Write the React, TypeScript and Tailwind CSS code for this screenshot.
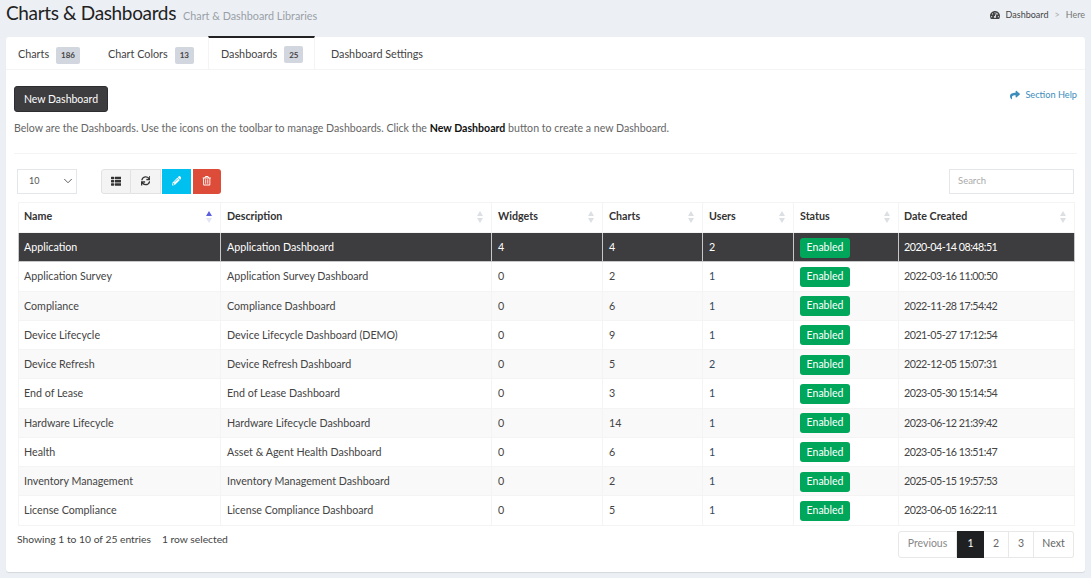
import { FaTachometerAlt, FaThList, FaSync, FaPencilAlt, FaRegTrashAlt, FaShare } from "react-icons/fa";
import { ChevronDown } from "lucide-react";

const rows = [
  ["Application", "Application Dashboard", "4", "4", "2", "2020-04-14 08:48:51"],
  ["Application Survey", "Application Survey Dashboard", "0", "2", "1", "2022-03-16 11:00:50"],
  ["Compliance", "Compliance Dashboard", "0", "6", "1", "2022-11-28 17:54:42"],
  ["Device Lifecycle", "Device Lifecycle Dashboard (DEMO)", "0", "9", "1", "2021-05-27 17:12:54"],
  ["Device Refresh", "Device Refresh Dashboard", "0", "5", "2", "2022-12-05 15:07:31"],
  ["End of Lease", "End of Lease Dashboard", "0", "3", "1", "2023-05-30 15:14:54"],
  ["Hardware Lifecycle", "Hardware Lifecycle Dashboard", "0", "14", "1", "2023-06-12 21:39:42"],
  ["Health", "Asset & Agent Health Dashboard", "0", "6", "1", "2023-05-16 13:51:47"],
  ["Inventory Management", "Inventory Management Dashboard", "0", "2", "1", "2025-05-15 19:57:53"],
  ["License Compliance", "License Compliance Dashboard", "0", "5", "1", "2023-06-05 16:22:11"],
];

const cols = [
  ["Name", "w-[202px] pl-[5px]"],
  ["Description", "w-[271px] pl-[6px]"],
  ["Widgets", "w-[111px] pl-[6px]"],
  ["Charts", "w-[100px] pl-[6px]"],
  ["Users", "w-[91px] pl-[6px]"],
  ["Status", "w-[105px] pl-[6px]"],
  ["Date Created", "w-[176px] pl-[5px]"],
];

function Sort({ active }: { active?: boolean }) {
  return (
    <span className="absolute right-[8px] top-[8px] flex flex-col gap-[2px]">
      <svg width="6" height="5" viewBox="0 0 6 5"><path d="M3 0L6 5H0z" fill={active ? "#5b5fe0" : "#dcdfe3"} /></svg>
      <svg width="6" height="5" viewBox="0 0 6 5"><path d="M0 0H6L3 5z" fill={active ? "#e3e4f6" : "#dcdfe3"} /></svg>
    </span>
  );
}

function Tab({ label, badge, active, w }: { label: string; badge?: string; active?: boolean; w: string }) {
  return (
    <div
      className={`flex items-center gap-[7px] pl-[12px] text-[10.8px] text-[#444] ${w} ${
        active ? "-mt-px h-[34px] border-x border-t-2 border-x-[#f4f4f4] border-t-[#222]" : "h-[33px] pt-[2px]"
      }`}
    >
      <span>{label}</span>
      {badge && (
        <span className="mt-[1px] flex h-[17px] items-center rounded-[2px] bg-[#d2d6de] px-[5px] text-[8px] font-bold text-[#444]">
          {badge}
        </span>
      )}
    </div>
  );
}

export default function App() {
  return (
    <div
      className="flex h-[578px] w-[1091px] flex-col overflow-hidden bg-[#ecf0f5] text-[10.7px] text-[#333]"
      style={{ fontFamily: "Lato, sans-serif" }}
    >
      <header className="flex h-[37px] shrink-0 items-start justify-between px-[6px]">
        <div className="flex items-baseline gap-[7px]">
          <h1 className="text-[19px] leading-[26px] tracking-[-0.35px] text-[#222]">Charts &amp; Dashboards</h1>
          <span className="text-[10.8px] text-[#9a9fa6]">Chart &amp; Dashboard Libraries</span>
        </div>
        <div className="mt-[8px] flex items-center text-[9px] text-[#444]">
          <FaTachometerAlt className="mr-[6px] text-[10px]" />
          <span>Dashboard</span>
          <span className="mx-[6px] text-[#aaa]">&gt;</span>
          <span className="text-[#777]">Here</span>
        </div>
      </header>

      <main className="mx-[6px] flex h-[535px] w-[1079px] flex-col rounded-[3px] bg-white shadow-[0_1px_1px_rgba(0,0,0,0.1)]">
        <nav className="flex h-[33px] shrink-0 border-b border-[#f4f4f4]">
          <Tab w="w-[90px]" label="Charts" badge="186" />
          <Tab w="w-[112px]" label="Chart Colors" badge="13" />
          <Tab w="w-[107px]" label="Dashboards" badge="25" active />
          <Tab w="w-[130px] ml-[4px]" label="Dashboard Settings" />
        </nav>

        <div className="flex flex-1 flex-col px-[11px]">
          <div className="flex items-start justify-between pt-[16px]">
            <button className="ml-[-3px] h-[26px] w-[94px] rounded-[3px] border border-[#2e2d2f] bg-[#3d3c3e] pt-[1px] text-[10.5px] text-white">
              New Dashboard
            </button>
            <div className="mr-[-3px] mt-[2px] flex items-center gap-[5px] text-[9.2px] text-[#3c8dbc]">
              <FaShare className="text-[10px]" />
              <span>Section Help</span>
            </div>
          </div>
          <p className="ml-[-3px] mt-[8px] text-[10.6px] leading-[16px] text-[#666]">
            Below are the Dashboards. Use the icons on the toolbar to manage Dashboards. Click the{" "}
            <b className="text-[#111]">New Dashboard</b> button to create a new Dashboard.
          </p>
          <div className="ml-[-3px] mr-[-3px] mt-[17px] border-t border-[#f4f4f4]" />

          <div className="mt-[14px] flex h-[26px] items-center">
            <div className="flex h-[25px] w-[60px] items-center justify-between border border-[#e4e6e9] pl-[11px] pr-[1px] text-[9px] text-[#555]">
              10
              <ChevronDown size={14} strokeWidth={1.6} />
            </div>
            <div className="ml-[24px] flex h-[25px]">
              <div className="flex w-[30px] items-center justify-center rounded-l-[3px] border border-[#e2e2e2] bg-[#f4f4f4] text-[#333]">
                <FaThList className="text-[10.5px]" />
              </div>
              <div className="flex w-[30px] items-center justify-center border border-l-0 border-[#e2e2e2] bg-[#f4f4f4] text-[#333]">
                <FaSync className="text-[9.5px]" />
              </div>
              <div className="ml-px flex w-[29px] items-center justify-center bg-[#00c0ef] text-white">
                <FaPencilAlt className="text-[9.5px]" />
              </div>
              <div className="ml-[2px] flex w-[28px] items-center justify-center rounded-r-[3px] bg-[#dd4b39] text-white">
                <FaRegTrashAlt className="text-[9.5px]" />
              </div>
            </div>
            <div className="ml-auto flex h-[25px] w-[125px] items-center border border-[#e4e6e9] pl-[8px] text-[9.5px] text-[#aaa]">
              Search
            </div>
          </div>

          <table className="ml-px mt-[8px] w-[1056px] table-fixed border-collapse">
            <thead>
              <tr className="h-[30px]">
                {cols.map(([name, w], i) => (
                  <th
                    key={name}
                    className={`relative border border-[#f4f4f4] pb-[3px] text-left text-[10.7px] font-bold text-[#333] ${w}`}
                  >
                    {name}
                    <Sort active={i === 0} />
                  </th>
                ))}
              </tr>
            </thead>
            <tbody>
              {rows.map((r, i) => {
                const sel = i === 0;
                const td = `border text-[10.7px] ${sel ? "border-[#c8c8c8]" : "border-[#f4f4f4]"}`;
                const txt = sel ? "text-white" : "text-[#444]";
                return (
                  <tr
                    key={r[0]}
                    className={`h-[29.25px] ${sel ? "bg-[#3d3c3e]" : i % 2 === 0 ? "bg-[#f9f9f9]" : "bg-white"}`}
                  >
                    <td className={`${td} ${txt} pl-[5px]`}>{r[0]}</td>
                    <td className={`${td} ${txt} pl-[6px]`}>{r[1]}</td>
                    <td className={`${td} ${txt} pl-[6px]`}>{r[2]}</td>
                    <td className={`${td} ${txt} pl-[6px]`}>{r[3]}</td>
                    <td className={`${td} pl-[6px] ${sel ? "text-white" : "text-[#34495e]"}`}>{r[4]}</td>
                    <td className={`${td} pl-[6px]`}>
                      <span className="mt-px flex h-[20px] w-[50px] items-center justify-center rounded-[3px] bg-[#00a65a] text-[10.5px] text-white">
                        Enabled
                      </span>
                    </td>
                    <td className={`${td} ${txt} pl-[5px] tracking-[-0.5px]`}>{r[5]}</td>
                  </tr>
                );
              })}
            </tbody>
          </table>

          <div className="mt-[5px] flex items-start justify-between">
            <div className="mt-px flex gap-[11px] text-[10.3px] text-[#444]">
              <span>Showing 1 to 10 of 25 entries</span>
              <span>1 row selected</span>
            </div>
            <div className="flex h-[27px] text-[10.5px] text-[#666]">
              <span className="flex w-[59px] items-center justify-center rounded-l-[3px] border border-[#e8e8e8] text-[#888]">Previous</span>
              <span className="flex w-[27px] items-center justify-center bg-[#1f2022] text-white">1</span>
              <span className="flex w-[25px] items-center justify-center border border-l-0 border-[#e8e8e8]">2</span>
              <span className="flex w-[25px] items-center justify-center border border-l-0 border-[#e8e8e8]">3</span>
              <span className="flex w-[40px] items-center justify-center rounded-r-[3px] border border-l-0 border-[#e8e8e8]">Next</span>
            </div>
          </div>
        </div>
      </main>
    </div>
  );
}
